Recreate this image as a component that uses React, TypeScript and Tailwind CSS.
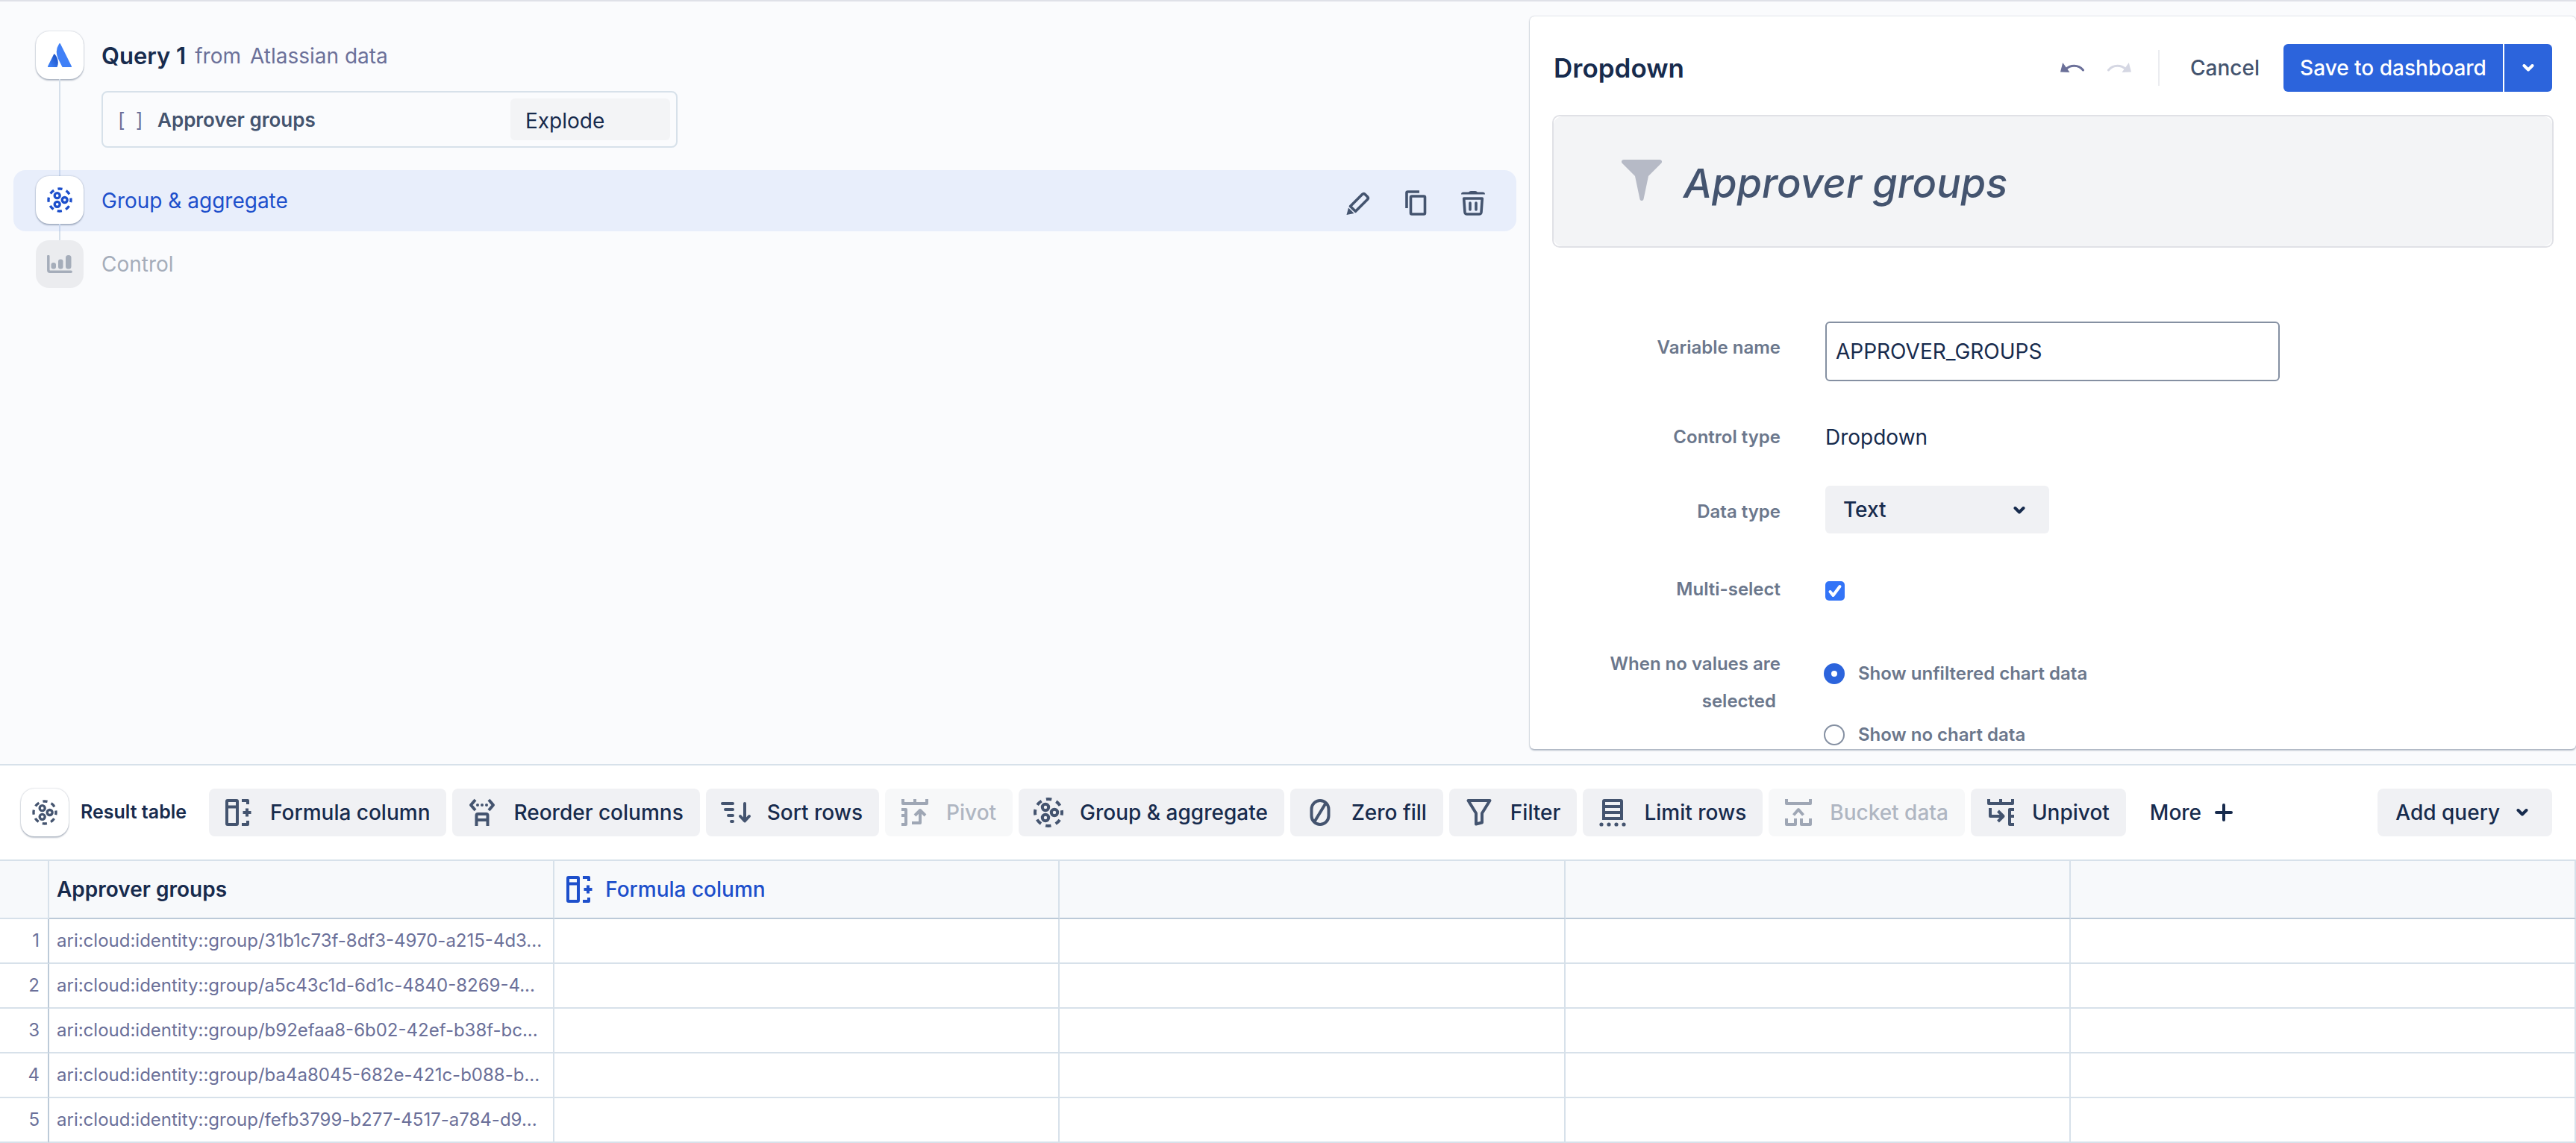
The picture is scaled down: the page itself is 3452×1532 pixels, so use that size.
import type { ReactNode, SVGProps } from "react";

function Glyph({ children, className = "size-12", ...rest }: SVGProps<SVGSVGElement>) {
  return (
    <svg
      viewBox="0 0 48 48"
      fill="none"
      stroke="currentColor"
      strokeWidth={4}
      aria-hidden="true"
      className={`shrink-0 ${className}`}
      {...rest}
    >
      {children}
    </svg>
  );
}

function GroupIcon({ className }: { className?: string }) {
  return (
    <Glyph className={className}>
      <circle cx="24" cy="24" r="18" strokeDasharray="7.54 6.6" strokeDashoffset="3.77" />
      <circle cx="20" cy="17" r="4.2" />
      <circle cx="32" cy="24" r="4.2" />
      <circle cx="20" cy="31" r="4.2" />
    </Glyph>
  );
}

function FormulaIcon() {
  return (
    <Glyph strokeLinejoin="round">
      <rect x="8" y="8" width="14" height="32" rx="1" />
      <path d="M8 16.5h14" />
      <path d="M28 8h8v5M28 40h8v-5" />
      <path d="M35 18.5v11M29.500 24h11" />
    </Glyph>
  );
}

function ReorderIcon() {
  return (
    <Glyph strokeLinejoin="round">
      <path d="M15 7l-6 7 6 7M33 7l6 7-6 7" />
      <path d="M16.500 42V28a2 2 0 0 1 2-2h11a2 2 0 0 1 2 2v14M16.500 34h15" />
      <g fill="currentColor" stroke="none">
        <circle cx="18" cy="14" r="2" />
        <circle cx="24" cy="14" r="2" />
        <circle cx="30" cy="14" r="2" />
      </g>
    </Glyph>
  );
}

function SortIcon() {
  return (
    <Glyph strokeLinecap="round" strokeLinejoin="round">
      <path d="M6 12h14M10 20h10M14 28h6M18 36h2" />
      <path d="M36 12v23M30 29l6 6.500 6-6.500" />
    </Glyph>
  );
}

function PivotIcon() {
  return (
    <Glyph strokeLinejoin="round">
      <path d="M8 6v6h32V6M24 6v6" />
      <path d="M6 20h6v20H6M6 28h6" />
      <path d="M20 38h11V21M24 28l7-7 7 7" />
    </Glyph>
  );
}

function ZeroIcon() {
  return (
    <Glyph strokeLinecap="round">
      <rect x="12.500" y="8" width="23" height="32" rx="11.500" />
      <path d="M17 35.500L31 12.500" />
    </Glyph>
  );
}

function FilterIcon() {
  return (
    <Glyph strokeLinejoin="round">
      <path d="M9.500 8h29L28 25v12.500l-8 2V25L9.500 8z" />
    </Glyph>
  );
}

function LimitIcon() {
  return (
    <Glyph>
      <path d="M12 32V9a1 1 0 0 1 1-1h22a1 1 0 0 1 1 1v23M12 16h24M12 24h24M10 32h28" />
      <g fill="currentColor" stroke="none">
        <circle cx="9" cy="40" r="2.600" />
        <circle cx="19" cy="40" r="2.600" />
        <circle cx="29" cy="40" r="2.600" />
        <circle cx="39" cy="40" r="2.600" />
      </g>
    </Glyph>
  );
}

function BucketIcon() {
  return (
    <Glyph strokeLinejoin="round">
      <path d="M8 6v6h32V6" />
      <path d="M17.500 27.500L24 20l6.500 7.500" />
      <path d="M8 32v8h12v-8M28 32v8h12v-8" />
    </Glyph>
  );
}

function UnpivotIcon() {
  return (
    <Glyph strokeLinejoin="round">
      <path d="M8 6v6h32V6M24 6v6" />
      <path d="M10 18v11h17M20.500 22l7 7-7 7" />
      <path d="M42 20h-6v20h6M42 29h-6" />
    </Glyph>
  );
}

function Chevron({ className = "" }: { className?: string }) {
  return (
    <svg viewBox="0 0 16 10" fill="none" stroke="currentColor" strokeWidth={4} strokeLinecap="round" strokeLinejoin="round" aria-hidden="true" className={`h-[10px] w-4 shrink-0 ${className}`}>
      <path d="M2.500 2L8 7.500 13.500 2" />
    </svg>
  );
}

function AtlassianLogo() {
  return (
    <svg viewBox="0 0 24 24" aria-hidden="true" className="size-8">
      <defs>
        <linearGradient id="wing" x1="0.9" y1="0.3" x2="0.3" y2="0.9">
          <stop offset="0" stopColor="#1e55c9" />
          <stop offset="1" stopColor="#3b7df3" />
        </linearGradient>
      </defs>
      <path fill="url(#wing)" d="M7.120 11.084a.683.683 0 0 0-1.160.126L.075 22.974a.703.703 0 0 0 .630 1.018h8.190a.678.678 0 0 0 .630-.390c1.767-3.650.696-9.203-2.406-12.520z" />
      <path fill="#4080f7" d="M11.434.386a15.515 15.515 0 0 0-.906 15.317l3.950 7.900a.703.703 0 0 0 .628.388h8.190a.703.703 0 0 0 .630-1.017L12.630.380a.664.664 0 0 0-1.196.006z" />
    </svg>
  );
}

function ChartIcon() {
  return (
    <svg viewBox="0 0 34 24" aria-hidden="true" className="h-6 w-[34px]" fill="currentColor">
      <path d="M1.800 1.500V20a2.200 2.200 0 0 0 2.200 2.200h28.200" fill="none" stroke="currentColor" strokeWidth="3.500" strokeLinecap="round" />
      <rect x="5.500" y="10" width="6.500" height="8.500" rx="3" />
      <rect x="15" y="5.500" width="6.500" height="13" rx="3" />
      <rect x="25" y="0" width="7.500" height="18.500" rx="3.500" />
    </svg>
  );
}

function PencilIcon() {
  return (
    <Glyph strokeLinejoin="round" strokeWidth={3.6}>
      <path d="M13.500 28.500L29.500 12.500c1.200-1.200 2.400-1.200 3.500-.200l3.500 3.500c1.100 1.100 1.100 2.300 0 3.400L20.500 35.300z" />
      <path d="M11 30.500l7.500 7.500L8.500 40z" fill="currentColor" stroke="none" />
    </Glyph>
  );
}

function CopyIcon() {
  return (
    <Glyph strokeLinejoin="round" strokeWidth={3.6}>
      <path d="M12 31V10.500a1.500 1.500 0 0 1 1.500-1.500H29" />
      <rect x="17.500" y="15" width="19" height="24" rx="1.500" />
    </Glyph>
  );
}

function TrashIcon() {
  return (
    <Glyph strokeLinejoin="round" strokeWidth={3.6}>
      <path d="M8 12.500a3 3 0 0 1 3-3h7a4 4 0 0 1 3-1.500h6a4 4 0 0 1 3 1.500h7a3 3 0 0 1 3 3z" fill="currentColor" stroke="none" />
      <path d="M11.700 18h24.600l-1.300 18.500a3 3 0 0 1-3 2.500H16a3 3 0 0 1-3-2.500z" />
      <path d="M20 24v9M28 24v9" strokeLinecap="round" />
    </Glyph>
  );
}

function UndoArrow({ className = "" }: { className?: string }) {
  return (
    <svg viewBox="0 0 32 14" aria-hidden="true" className={`h-[14px] w-8 ${className}`}>
      <path d="M7 9C13 3 24 2 30.500 10" fill="none" stroke="currentColor" strokeWidth="3" strokeLinecap="round" />
      <path d="M3.200 0L12.500 13 0 12.500z" fill="currentColor" />
    </svg>
  );
}

const cardShadow = "shadow-[0_2px_2px_rgba(9,30,66,0.25),0_0_2px_rgba(9,30,66,0.31)]";

function Card({ children }: { children: ReactNode }) {
  return (
    <div className={`flex size-16 shrink-0 items-center justify-center rounded-[18px] bg-white ${cardShadow}`}>{children}</div>
  );
}

function QuerySteps() {
  return (
    <section aria-label="Query steps" className="min-w-0 flex-1 px-[18px] pt-10">
      <div className="flex gap-6 pl-[30px]">
        <div className="flex flex-col items-center">
          <Card>
            <AtlassianLogo />
          </Card>
          <div className="w-0.5 flex-1 bg-[#d5dfea]" />
        </div>
        <div className="pb-[30px]">
          <div className="flex h-16 items-center pt-0.5 whitespace-nowrap">
            <h2 className="text-[31px] font-semibold text-[#172b4d]">Query 1</h2>
            <span className="ml-3 text-[28px] text-[#6b7099]">from</span>
            <button type="button" className="ml-3 text-[28px] text-[#6b7099]">Atlassian data</button>
          </div>
          <div className="mt-4 flex h-[76px] w-[772px] items-center rounded-lg border-2 border-[#d7e1ea] pr-2 pl-5">
            <span className="w-[53px] text-[26px] whitespace-pre text-[#6b7099]">[  ]</span>
            <span className="flex-1 text-[26px] font-semibold text-[#44546f]">Approver groups</span>
            <button type="button" className="h-14 w-[214px] rounded-md bg-[#f3f4f6] px-5 pt-1 text-left text-[28px] text-[#172b4d]">
              Explode
            </button>
          </div>
        </div>
      </div>

      <div className="flex rounded-2xl bg-[#e8eefb] pr-[34px] pl-[30px]">
        <div className="flex flex-col items-center">
          <div className="h-2 w-0.5 bg-[#c9d7ee]" />
          <Card>
            <GroupIcon className="size-10 text-[#1d4fcb]" />
          </Card>
          <div className="h-[10px] w-0.5 bg-[#c9d7ee]" />
        </div>
        <button type="button" className="ml-6 flex-1 text-left text-[28px] text-[#1d4fcb]">Group &amp; aggregate</button>
        <div className="flex items-center gap-[29px] pt-1.5 text-[#44546f]">
          <button type="button" aria-label="Edit"><PencilIcon /></button>
          <button type="button" aria-label="Duplicate"><CopyIcon /></button>
          <button type="button" aria-label="Delete"><TrashIcon /></button>
        </div>
      </div>

      <div className="flex gap-6 pl-[30px]">
        <div className="flex flex-col items-center">
          <div className="h-3 w-0.5 bg-[#d5dfea]" />
          <div className="flex size-16 items-center justify-center rounded-[18px] bg-[#ebecef] text-[#a5adba]">
            <ChartIcon />
          </div>
        </div>
        <span className="pt-3 text-[28px] leading-16 text-[#a5adba]">Control</span>
      </div>
    </section>
  );
}

const labelText = "text-right text-[24px] font-semibold leading-[50px] text-[#6b778c]";

function DropdownPanel() {
  return (
    <section
      aria-label="Dropdown settings"
      className={`w-[1402px] shrink-0 overflow-hidden rounded-md bg-white px-[30px] pt-[37px] ${cardShadow}`}
    >
      <header className="flex h-16 items-center px-0.5">
        <h1 className="flex-1 text-[35px] font-semibold text-[#172b4d]">Dropdown</h1>
        <button type="button" aria-label="Undo" className="text-[#6b7099]"><UndoArrow /></button>
        <button type="button" aria-label="Redo" className="ml-[31px] text-[#d5d7e3]"><UndoArrow className="-scale-x-100" /></button>
        <div className="ml-9 h-12 w-0.5 bg-[#ebecf0]" />
        <button type="button" className="ml-[41px] text-[28px] font-medium text-[#44546f]">Cancel</button>
        <button type="button" className="ml-8 h-16 w-[294px] rounded-l-md bg-[#2c64dc] text-[28px] font-medium text-white">Save to dashboard</button>
        <button type="button" aria-label="More save options" className="ml-0.5 flex h-16 w-16 items-center justify-center rounded-r-md bg-[#2c64dc] text-white">
          <Chevron />
        </button>
      </header>

      <div className="mt-[31px] rounded-[10px] border-2 border-[#e0e1e6]">
        <div className="flex h-[174px] items-center rounded-xl bg-[#f3f4f6] pl-[91px]">
          <svg viewBox="0 0 54 55" aria-hidden="true" className="mb-1 h-[55px] w-[54px] text-[#b6bac6]" fill="currentColor">
            <path d="M3 0h48c3 0 4 3 2 5L36 22l-6.500 31c-.8 2.700-4.200 2.700-5 0L18 22 1 5c-2-2-1-5 2-5z" />
          </svg>
          <span className="ml-[29px] pt-1 text-[54px] font-medium text-[#44546f] italic">Approver groups</span>
        </div>
      </div>

      <form className="mt-[99px] grid grid-cols-[306px_1fr] items-start gap-x-[60px]">
        <label htmlFor="variable" className={`${labelText} pt-[10px]`}>Variable name</label>
        <input
          id="variable"
          defaultValue="APPROVER_GROUPS"
          className="h-20 w-[609px] rounded-md border-2 border-[#8590a2] px-3 text-[28px] text-[#172b4d]"
        />

        <span className={`${labelText} mt-[50px]`}>Control type</span>
        <span className="mt-[50px] text-[28px] leading-[50px] text-[#172b4d]">Dropdown</span>

        <label htmlFor="datatype" className={`${labelText} mt-[50px]`}>Data type</label>
        <div className="relative mt-10 h-16 w-[300px] text-[#172b4d]">
          <select id="datatype" className="size-full appearance-none rounded-md bg-[#f0f1f4] px-6 text-[28px] font-medium">
            <option>Text</option>
          </select>
          <Chevron className="pointer-events-none absolute top-7 right-8" />
        </div>

        <label htmlFor="multi" className={`${labelText} mt-[50px]`}>Multi-select</label>
        <div className="relative mt-16 size-[26px]">
          <input id="multi" type="checkbox" defaultChecked className="block size-full appearance-none rounded-[5px] bg-[#3374f7]" />
          <svg viewBox="0 0 26 26" aria-hidden="true" className="pointer-events-none absolute inset-0" fill="none" stroke="white" strokeWidth="4" strokeLinecap="round" strokeLinejoin="round">
            <path d="M6.500 14l4 5 9-12" />
          </svg>
        </div>

        <span id="novalues" className={`${labelText} mt-[50px] ml-auto w-[250px]`}>When no values are selected&nbsp;</span>
        <div role="radiogroup" aria-labelledby="novalues" className="mt-[74px] flex flex-col gap-[54px] text-[24px] font-semibold text-[#6b778c]">
          <label className="-ml-0.5 flex h-7 items-center gap-[18px]">
            <input type="radio" name="empty" defaultChecked className="size-7 appearance-none rounded-full border-[#8590a2] not-checked:border-2 checked:border-10 checked:border-[#2c64dc]" />
            Show unfiltered chart data
          </label>
          <label className="-ml-0.5 flex h-7 items-center gap-[18px]">
            <input type="radio" name="empty" className="size-7 appearance-none rounded-full border-[#8590a2] not-checked:border-2 checked:border-10 checked:border-[#2c64dc]" />
            Show no chart data
          </label>
        </div>
      </form>
    </section>
  );
}

const tools: { label: string; icon: ReactNode; disabled?: boolean }[] = [
  { label: "Formula column", icon: <FormulaIcon /> },
  { label: "Reorder columns", icon: <ReorderIcon /> },
  { label: "Sort rows", icon: <SortIcon /> },
  { label: "Pivot", icon: <PivotIcon />, disabled: true },
  { label: "Group & aggregate", icon: <GroupIcon /> },
  { label: "Zero fill", icon: <ZeroIcon /> },
  { label: "Filter", icon: <FilterIcon /> },
  { label: "Limit rows", icon: <LimitIcon /> },
  { label: "Bucket data", icon: <BucketIcon />, disabled: true },
  { label: "Unpivot", icon: <UnpivotIcon /> },
];

function Toolbar() {
  return (
    <div className="flex h-[126px] items-center gap-2 pr-8 pl-7 text-[28px] font-medium whitespace-nowrap text-[#172b4d]">
      <Card>
        <GroupIcon className="size-10 text-[#44546f]" />
      </Card>
      <h2 className="mr-[22px] ml-2 text-[25px] font-semibold">Result table</h2>
      {tools.map((t) => (
        <button
          key={t.label}
          type="button"
          disabled={t.disabled}
          className="group flex h-16 items-center gap-[18px] rounded-lg bg-[#f0f1f4] pr-[22px] pl-4 disabled:bg-[#f7f8f9] disabled:text-[#afb6c2]"
        >
          <span className="text-[#44546f] group-disabled:text-[#9fa7b5]">{t.icon}</span>
          {t.label}
        </button>
      ))}
      <button type="button" className="ml-6 flex h-16 items-center gap-[18px]">
        More
        <svg viewBox="0 0 24 24" aria-hidden="true" className="size-6" stroke="currentColor" strokeWidth="4" strokeLinecap="round">
          <path d="M12 2v20M2 12h20" />
        </svg>
      </button>
      <button type="button" className="ml-auto flex h-16 items-center gap-[22px] rounded-lg bg-[#f0f1f4] pr-8 pl-6">
        Add query
        <Chevron />
      </button>
    </div>
  );
}

const rows = [
  "ari:cloud:identity::group/31b1c73f-8df3-4970-a215-4d3...",
  "ari:cloud:identity::group/a5c43c1d-6d1c-4840-8269-4...",
  "ari:cloud:identity::group/b92efaa8-6b02-42ef-b38f-bc...",
  "ari:cloud:identity::group/ba4a8045-682e-421c-b088-b...",
  "ari:cloud:identity::group/fefb3799-b277-4517-a784-d9...",
];

function ResultTable() {
  const head = "border-r-2 border-b-2 border-r-[#d7e1ea] border-b-[#bccad8] px-[10px]";
  const cell = "border-r-2 border-b-2 border-[#d7e1ea]";
  return (
    <table className="w-full table-fixed border-separate border-spacing-0 border-t-2 border-[#d7e1ea] text-left">
      <thead>
        <tr className="h-[78px] bg-[#f7f9fb] text-[28px]">
          <th className="w-[66px] border-r-2 border-b-2 border-[#d7e1ea]" aria-label="Row" />
          <th className={`${head} font-semibold text-[#172b4d]`}>Approver groups</th>
          <th className={head}>
            <button type="button" className="flex items-center gap-[10px] font-medium text-[#1d4fcb]">
              <FormulaIcon />
              Formula column
            </button>
          </th>
          <th className={head} />
          <th className={head} />
          <th className={head} />
        </tr>
      </thead>
      <tbody className="text-[24px] text-[#6b7099]">
        {rows.map((value, i) => (
          <tr key={value} className="h-[60px]">
            <td className="border-r-2 border-b-2 border-r-[#bccad8] border-b-[#d7e1ea] pr-[11px] text-right">{i + 1}</td>
            <td className={`${cell} pl-[10px] whitespace-nowrap`}>{value}</td>
            <td className={cell} />
            <td className={cell} />
            <td className={cell} />
            <td className={cell} />
          </tr>
        ))}
      </tbody>
    </table>
  );
}

export default function App() {
  return (
    <div className="flex h-screen flex-col border-t-2 border-[#dfe1e8] bg-[#fafbfd] font-['Inter',sans-serif]">
      <main className="flex min-h-0 flex-1 pt-5 pb-5">
        <div className="-mt-5 flex min-w-0 flex-1">
          <QuerySteps />
        </div>
        <DropdownPanel />
      </main>
      <div className="shrink-0 border-t-2 border-[#d7e1ea] bg-white">
        <Toolbar />
        <ResultTable />
      </div>
    </div>
  );
}
